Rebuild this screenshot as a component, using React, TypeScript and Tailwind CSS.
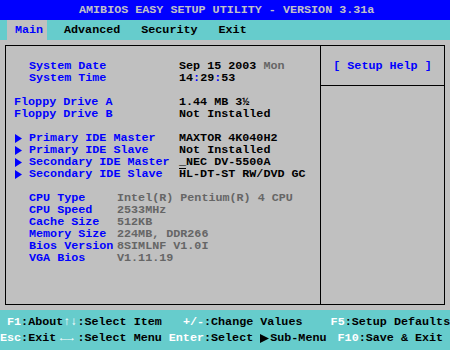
import React from "react";

const Tri = ({ w = 7, h = 9 }: { w?: number; h?: number }) => (
  <svg width={w} height={h} viewBox={`0 0 ${w} ${h}`} className="inline-block">
    <path d={`M0 0L${w} ${h / 2}L0 ${h}Z`} fill="currentColor" />
  </svg>
);

type RowProps = {
  label?: string;
  pl?: number;
  arrow?: boolean;
  col?: number;
  children?: React.ReactNode;
};

const Row = ({ label, pl = 23, arrow, col = 173, children }: RowProps) => (
  <div className="flex h-[12px] items-center whitespace-pre">
    <div className="flex h-full items-center shrink-0" style={{ width: col }}>
      {arrow ? (
        <div className="flex items-center pl-[9px] text-[#0000ff]">
          <Tri />
          <span className="ml-[7px]">{label}</span>
        </div>
      ) : (
        <span className="text-[#0000ff]" style={{ paddingLeft: pl }}>
          {label}
        </span>
      )}
    </div>
    <div className="flex items-center">{children}</div>
  </div>
);

const Blank = () => <div className="h-[12px]" />;

export default function App() {
  return (
    <div className="w-[450px] h-[350px] flex flex-col overflow-hidden font-['Liberation_Mono','DejaVu_Sans_Mono',monospace] font-bold text-[11.72px] leading-[12px] text-black">
      {/* Title */}
      <div className="h-[20px] shrink-0 bg-[#0000ff] flex items-center pl-[79px] whitespace-pre text-[#c0c0c8]">
        AMIBIOS EASY SETUP UTILITY - VERSION 3.31a
      </div>
      {/* Menu */}
      <div className="h-[20px] shrink-0 bg-[#66cccc] flex items-stretch whitespace-pre">
        <div className="ml-[7px] w-[40px] pl-[8px] bg-[#c0c0c0] flex items-center text-[#0000ff]">Main</div>
        <div className="ml-[17px] flex items-center">Advanced</div>
        <div className="ml-[21px] flex items-center">Security</div>
        <div className="ml-[21px] flex items-center">Exit</div>
      </div>
      {/* Body */}
      <div className="flex-1 bg-[#c0c0c0] px-[5px] pt-[5px] pb-[5px] flex">
        <div className="flex-1 border border-black flex">
          <div className="w-[315px] border-r border-black pt-[14px]">
            <Row label="System Date">
              <span>Sep 15 2003 </span>
              <span className="text-[#666666]">Mon</span>
            </Row>
            <Row label="System Time">
              <span>14</span>
              <span className="text-[#0000ff]">:</span>
              <span>29</span>
              <span className="text-[#0000ff]">:</span>
              <span>53</span>
            </Row>
            <Blank />
            <Row label="Floppy Drive A" pl={8}>
              <span>1.44 MB 3½</span>
            </Row>
            <Row label="Floppy Drive B" pl={8}>
              <span>Not Installed</span>
            </Row>
            <Blank />
            <Row label="Primary IDE Master" arrow>
              <span>MAXTOR 4K040H2</span>
            </Row>
            <Row label="Primary IDE Slave" arrow>
              <span>Not Installed</span>
            </Row>
            <Row label="Secondary IDE Master" arrow>
              <span>_NEC DV-5500A</span>
            </Row>
            <Row label="Secondary IDE Slave" arrow>
              <span className="relative">
                H
                <span className="absolute left-0 right-0 top-[0px] h-[1px] bg-black" />
              </span>
              <span>L-DT-ST RW/DVD GC</span>
            </Row>
            <Blank />
            <Row label="CPU Type" col={111}>
              <span className="text-[#666666]">Intel(R) Pentium(R) 4 CPU</span>
            </Row>
            <Row label="CPU Speed" col={111}>
              <span className="text-[#666666]">2533MHz</span>
            </Row>
            <Row label="Cache Size" col={111}>
              <span className="text-[#666666]">512KB</span>
            </Row>
            <Row label="Memory Size" col={111}>
              <span className="text-[#666666]">224MB, DDR266</span>
            </Row>
            <Row label="Bios Version" col={111}>
              <span className="text-[#666666]">8SIMLNF V1.0I</span>
            </Row>
            <Row label="VGA Bios" col={111}>
              <span className="text-[#666666]">V1.11.19</span>
            </Row>
          </div>
          <div className="flex-1 flex flex-col">
            <div className="h-[40px] border-b border-black flex items-center justify-center text-[#0000ff] whitespace-pre">
              [ Setup Help ]
            </div>
          </div>
        </div>
      </div>
      {/* Footer */}
      <div className="h-[40px] shrink-0 bg-[#66cccc] pt-[4px] whitespace-pre leading-[16px]">
        <div className="h-[16px] flex items-center">
          <span className="text-white"> F1</span>
          <span>:About</span>
          <span className="text-white">↑↓</span>
          <span>:Select Item   </span>
          <span className="text-white">+/-</span>
          <span>:Change Values    </span>
          <span className="text-white">F5</span>
          <span>:Setup Defaults</span>
        </div>
        <div className="h-[16px] flex items-center">
          <span className="text-white">Esc</span>
          <span>:Exit</span>
          <span className="text-white inline-block w-[3ch] text-center">←→</span>
          <span>:Select Menu </span>
          <span className="text-white">Enter</span>
          <span>:Select </span>
          <span className="inline-flex w-[11ch] items-center">
            <Tri w={9} h={9} />
            <span className="ml-[1px]">Sub-Menu</span>
          </span>
          <span className="text-white">F10</span>
          <span>:Save &amp; Exit</span>
        </div>
      </div>
    </div>
  );
}
